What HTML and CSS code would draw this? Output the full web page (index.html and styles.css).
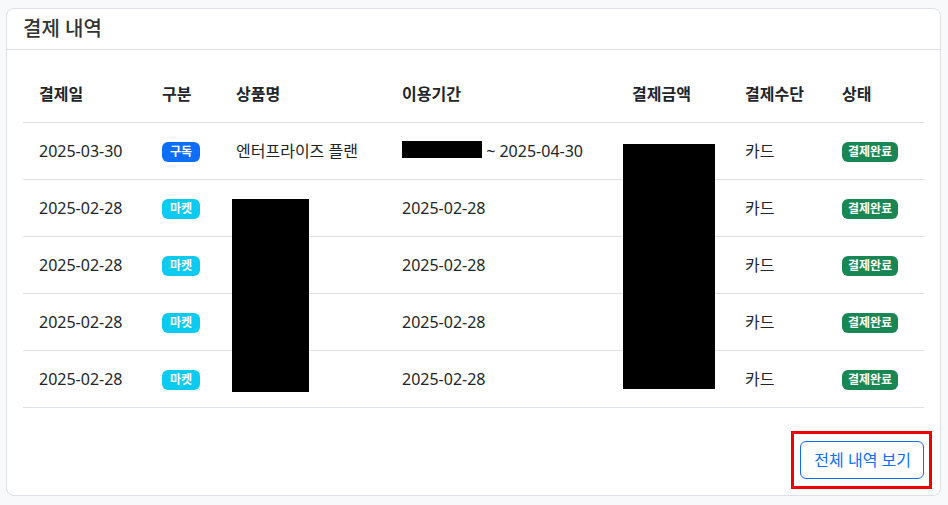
FILE: index.html
```html
<!DOCTYPE html>
<html lang="ko">
  <head>
    <meta charset="UTF-8" />
    <meta name="viewport" content="width=device-width, initial-scale=1.0" />
    <title>결제 내역</title>
    <link rel="stylesheet" href="styles.css">
  </head>
  <body>
    <div class="card">
      <div class="card-header">결제 내역</div>
      <div class="card-body">
        <div class="table-wrap">
          <table class="pay-table">
            <colgroup>
              <col style="width: 123px" />
              <col style="width: 74px" />
              <col style="width: 166px" />
              <col style="width: 230px" />
              <col style="width: 113px" />
              <col style="width: 97px" />
              <col />
            </colgroup>
            <thead>
              <tr>
                <th>결제일</th>
                <th>구분</th>
                <th>상품명</th>
                <th>이용기간</th>
                <th>결제금액</th>
                <th>결제수단</th>
                <th>상태</th>
              </tr>
            </thead>
            <tbody>
              <tr>
                <td>2025-03-30</td>
                <td><span class="badge badge-sub">구독</span></td>
                <td>엔터프라이즈 플랜</td>
                <td><span class="redact-inline"></span> ~ 2025-04-30</td>
                <td></td>
                <td>카드</td>
                <td><span class="badge badge-done">결제완료</span></td>
              </tr>
              <tr>
                <td>2025-02-28</td>
                <td><span class="badge badge-market">마켓</span></td>
                <td></td>
                <td>2025-02-28</td>
                <td></td>
                <td>카드</td>
                <td><span class="badge badge-done">결제완료</span></td>
              </tr>
              <tr>
                <td>2025-02-28</td>
                <td><span class="badge badge-market">마켓</span></td>
                <td></td>
                <td>2025-02-28</td>
                <td></td>
                <td>카드</td>
                <td><span class="badge badge-done">결제완료</span></td>
              </tr>
              <tr>
                <td>2025-02-28</td>
                <td><span class="badge badge-market">마켓</span></td>
                <td></td>
                <td>2025-02-28</td>
                <td></td>
                <td>카드</td>
                <td><span class="badge badge-done">결제완료</span></td>
              </tr>
              <tr>
                <td>2025-02-28</td>
                <td><span class="badge badge-market">마켓</span></td>
                <td></td>
                <td>2025-02-28</td>
                <td></td>
                <td>카드</td>
                <td><span class="badge badge-done">결제완료</span></td>
              </tr>
            </tbody>
          </table>

          <!-- 가림 처리 -->
          <div class="redact redact-product"></div>
          <div class="redact redact-amount"></div>
        </div>

        <div class="card-actions">
          <div class="highlight">
            <button class="btn-outline">전체 내역 보기</button>
          </div>
        </div>
      </div>
    </div>
  </body>
</html>
```

FILE: styles.css
```css
body {
  margin: 8px 7px 0 6px;
  background-color: #f8f9fa;
  font-family: "Noto Sans", "Noto Sans CJK KR", sans-serif;
  color: #212529;
  font-size: 16px;
}

.card {
  background-color: #ffffff;
  border: 1px solid #dcdfe3;
  border-radius: 8px;
}

.card-header {
  padding: 8px 16px;
  font-size: 20px;
  line-height: 24px;
  font-weight: 500;
  color: #333;
  border-bottom: 1px solid #dcdfe3;
}

.card-body {
  padding: 16px;
}

.table-wrap {
  position: relative;
  margin-bottom: 16px;
}

.pay-table {
  width: 100%;
  border-collapse: collapse;
  table-layout: fixed;
}

.pay-table th,
.pay-table td {
  padding: 16px;
  line-height: 24px;
  text-align: left;
  white-space: nowrap;
  border-bottom: 1px solid #dee2e6;
}

.pay-table th {
  font-weight: bold;
}

.badge {
  display: inline-block;
  padding: 4px 7px;
  font-size: 12px;
  line-height: 12px;
  font-weight: bold;
  color: #ffffff;
  border-radius: 6px;
  vertical-align: 1px;
}

.badge-sub {
  background-color: #0d6efd;
  padding: 4px 8px;
}

.badge-market {
  background-color: #0dcaf0;
  padding: 4px 8px;
}

.badge-done {
  background-color: #198754;
  padding: 4px 6px;
}

.redact-inline {
  display: inline-block;
  width: 80px;
  height: 17px;
  background-color: #000;
  vertical-align: -1px;
}

.redact {
  position: absolute;
  background-color: #000;
}

.redact-product {
  left: 209px;
  top: 133px;
  width: 77px;
  height: 193px;
}

.redact-amount {
  left: 600px;
  top: 78px;
  width: 92px;
  height: 245px;
}

.card-actions {
  display: flex;
  justify-content: flex-end;
  padding-top: 7px;
  margin-bottom: -10px;
  margin-right: -8px;
}

.highlight {
  border: 3px solid #ee0000;
  padding: 7px 5px 7px 6px;
}

.btn-outline {
  display: block;
  font-family: inherit;
  font-size: 16px;
  line-height: 24px;
  padding: 6px 12px 6px 13px;
  color: #0d6efd;
  background-color: #ffffff;
  border: 1px solid #0d6efd;
  border-radius: 6px;
  cursor: pointer;
}
```
